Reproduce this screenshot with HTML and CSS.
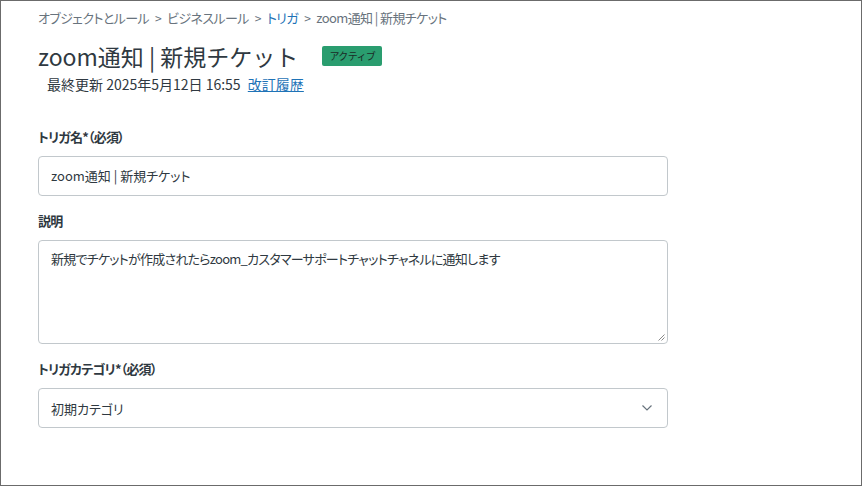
FILE: index.html
```html
<!DOCTYPE html>
<html lang="ja">
<head>
<meta charset="utf-8">
<link rel="stylesheet" href="styles.css">
</head>
<body>
<div class="frame">
  <nav class="crumbs">
    <span>オブジェクトとルール</span>
    <span class="sep">&gt;</span>
    <span>ビジネスルール</span>
    <span class="sep">&gt;</span>
    <a class="crumb-link">トリガ</a>
    <span class="sep">&gt;</span>
    <span>zoom通知 | 新規チケット</span>
  </nav>
  <div class="title-row">
    <h1 class="title">zoom通知 | 新規チケット</h1>
    <span class="badge">アクティブ</span>
  </div>
  <div class="meta">最終更新 2025年5月12日 16:55 <a class="link">改訂履歴</a></div>

  <div class="field">
    <label class="label">トリガ名*（必須）</label>
    <div class="input">zoom通知 | 新規チケット</div>
  </div>
  <div class="field">
    <label class="label">説明</label>
    <div class="textarea">新規でチケットが作成されたらzoom_カスタマーサポートチャットチャネルに通知します
      <svg class="grip" width="7" height="7" viewBox="0 0 7 7"><path d="M6.5 0.5 L0.5 6.5 M6.5 3.5 L3.5 6.5" stroke="#8a8a8a" stroke-width="1" fill="none"/></svg>
    </div>
  </div>
  <div class="field">
    <label class="label">トリガカテゴリ*（必須）</label>
    <div class="select">
      <span>初期カテゴリ</span>
      <svg width="12" height="8" viewBox="0 0 12 8"><path d="M1.5 1.5 L6 6 L10.5 1.5" stroke="#68737d" stroke-width="1.2" fill="none"/></svg>
    </div>
  </div>
</div>
</body>
</html>
```
FILE: styles.css
```css
* { box-sizing: border-box; }
html, body { margin: 0; padding: 0; background: #fff; }
body {
  font-family: "Noto Sans CJK JP", "Noto Sans", sans-serif;
  color: #2f3941;
}
.frame {
  width: 862px;
  height: 486px;
  border: 1px solid #6b6b6b;
  padding: 7px 0 0 37px;
  overflow: hidden;
}
.crumbs {
  display: flex;
  align-items: center;
  gap: 6px;
  font-size: 13px;
  line-height: 20px;
  color: #68737d;
  letter-spacing: -0.6px;
  font-feature-settings: "palt";
}
.crumbs .sep { font-size: 12px; color: #68737d; }
.crumb-link { color: #1f73b7; }
.title-row {
  display: flex;
  align-items: center;
  gap: 24px;
  margin-top: 12px;
}
.title {
  margin: 0;
  font-size: 23px;
  font-weight: 400;
  line-height: 32px;
  color: #2f3941;
}
.badge {
  background: #2a9d6f;
  color: #1b2a26;
  font-size: 10px;
  line-height: 20px;
  height: 20px;
  padding: 0 7px;
  letter-spacing: -0.6px;
  border-radius: 2px;
}
.meta {
  margin-top: 2px;
  padding-left: 9px;
  font-size: 14px;
  line-height: 20px;
  color: #2f3941;
}
.link { color: #1f73b7; text-decoration: underline; margin-left: 4px; }
.field { width: 630px; margin-top: 15px; }
.meta + .field { margin-top: 33px; }
.label {
  display: block;
  font-size: 13px;
  font-weight: 700;
  line-height: 20px;
  color: #2f3941;
  margin-bottom: 9px;
  letter-spacing: -0.8px;
  font-feature-settings: "palt";
}
.input, .select, .textarea {
  border: 1px solid #c2c8cc;
  border-radius: 4px;
  font-size: 13px;
  color: #2f3941;
  font-feature-settings: "palt";
}
.input {
  height: 40px;
  line-height: 38px;
  padding: 0 12px;
}
.textarea {
  position: relative;
  height: 104px;
  padding: 8px 12px;
  line-height: 20px;
  letter-spacing: -0.75px;
}
.grip { position: absolute; right: 2px; bottom: 2px; }
.select {
  height: 40px;
  display: flex;
  align-items: center;
  justify-content: space-between;
  padding: 0 14px 0 12px;
}
```
